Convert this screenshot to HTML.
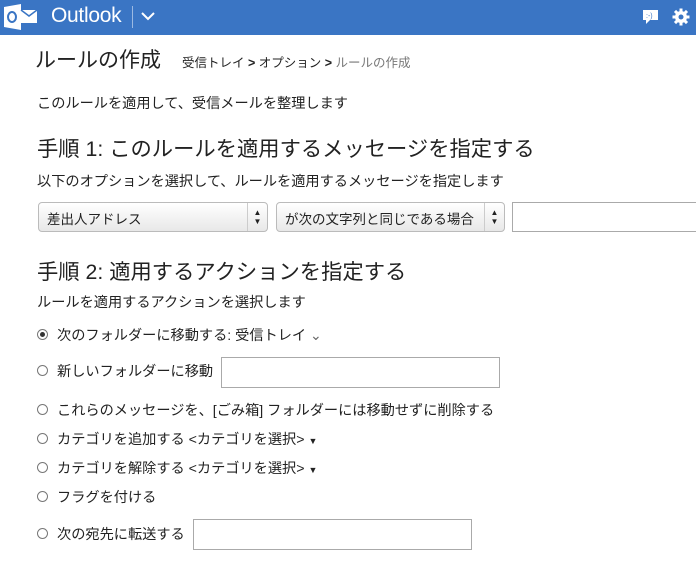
<!DOCTYPE html>
<html><head><meta charset="utf-8"><style>
*{margin:0;padding:0;box-sizing:border-box}
body{width:696px;height:571px;overflow:hidden;background:#fff;font-family:"Liberation Sans","Noto Sans CJK JP",sans-serif;color:#222;position:relative}
.hdr{position:absolute;left:0;top:0;width:696px;height:35px;background:#3a75c4}
.a{position:absolute;white-space:nowrap}
.sel{position:absolute;height:30px;border:1px solid #bbb;border-radius:4px;background:linear-gradient(#fff,#e8e8e8);font-size:13.5px;padding:5px 8px}
.arr{position:absolute;right:0;top:0;width:20px;height:28px;border-left:1px solid #ccc;font-size:8px;text-align:center;line-height:9px;padding-top:5px}
.r{position:absolute;left:37px;width:11px;height:11px;border:1px solid #777;border-radius:50%}
.t{font-size:14.2px}
.h{font-size:21.3px}
.in{position:absolute;border:1px solid #aaa;background:#fff}
</style></head><body>
<div class="hdr">
<svg class="a" style="left:2px;top:3px" width="46" height="28"><path d="M2 4L19 1V27L2 24Z" fill="#fff"/><rect x="19" y="7" width="16" height="13" fill="#fff"/><path d="M19 7l8 6 8-6" stroke="#3a75c4" stroke-width="1.5" fill="none"/><ellipse cx="10" cy="14" rx="4" ry="5" fill="none" stroke="#3a75c4" stroke-width="2"/></svg>
<div class="a" style="left:51px;top:4px;font-size:21px;color:#fff;letter-spacing:-0.3px">Outlook</div>
<div class="a" style="left:132px;top:6px;width:1px;height:22px;background:#9bb9e2"></div>
<svg class="a" style="left:141px;top:11px" width="14" height="10"><path d="M1 2l6 6 6-6" stroke="#fff" stroke-width="2" fill="none"/></svg>
<svg class="a" style="left:642px;top:9px" width="18" height="17"><path d="M1 1h15v10h-8l-4 4v-4H1z" fill="#fff"/><text x="4" y="9" font-size="7" fill="#3a75c4" font-family="Liberation Sans">:-)</text></svg>
<svg class="a" style="left:672px;top:8px" width="18" height="18" viewBox="0 0 18 18"><g fill="#fff"><circle cx="9" cy="9" r="6"/><rect x="7.5" y="0.5" width="3" height="17"/><rect x="0.5" y="7.5" width="17" height="3"/><rect x="7.5" y="0.5" width="3" height="17" transform="rotate(45 9 9)"/><rect x="7.5" y="0.5" width="3" height="17" transform="rotate(-45 9 9)"/></g><circle cx="9" cy="9" r="2.5" fill="#3a75c4"/></svg>
</div>
<div class="a" style="left:35px;top:44px;font-size:21px">ルールの作成</div>
<div class="a" style="left:182px;top:52px;font-size:12.5px">受信トレイ <b>&gt;</b> オプション <b>&gt;</b> <span style="color:#777">ルールの作成</span></div>
<div class="a t" style="left:37px;top:93px">このルールを適用して、受信メールを整理します</div>
<div class="a h" style="left:37px;top:132px">手順 1: このルールを適用するメッセージを指定する</div>
<div class="a t" style="left:37px;top:171px">以下のオプションを選択して、ルールを適用するメッセージを指定します</div>
<div class="sel" style="left:38px;top:202px;width:230px">差出人アドレス<div class="arr">▲<br>▼</div></div>
<div class="sel" style="left:276px;top:202px;width:229px">が次の文字列と同じである場合<div class="arr">▲<br>▼</div></div>
<div class="in" style="left:512px;top:202px;width:190px;height:30px"></div>
<div class="a h" style="left:37px;top:255px">手順 2: 適用するアクションを指定する</div>
<div class="a t" style="left:37px;top:292px">ルールを適用するアクションを選択します</div>
<div class="r" style="top:329px"><div style="position:absolute;left:2px;top:2px;width:5px;height:5px;border-radius:50%;background:#333"></div></div>
<div class="a t" style="left:57px;top:325px">次のフォルダーに移動する: 受信トレイ <span style="color:#666">⌄</span></div>
<div class="r" style="top:365px"></div>
<div class="a t" style="left:57px;top:361px">新しいフォルダーに移動</div>
<div class="in" style="left:221px;top:357px;width:279px;height:31px"></div>
<div class="r" style="top:404px"></div>
<div class="a t" style="left:57px;top:400px">これらのメッセージを、[ごみ箱] フォルダーには移動せずに削除する</div>
<div class="r" style="top:433px"></div>
<div class="a t" style="left:57px;top:429px">カテゴリを追加する &lt;カテゴリを選択&gt; <span style="font-size:9px">▼</span></div>
<div class="r" style="top:462px"></div>
<div class="a t" style="left:57px;top:458px">カテゴリを解除する &lt;カテゴリを選択&gt; <span style="font-size:9px">▼</span></div>
<div class="r" style="top:491px"></div>
<div class="a t" style="left:57px;top:487px">フラグを付ける</div>
<div class="r" style="top:528px"></div>
<div class="a t" style="left:57px;top:524px">次の宛先に転送する</div>
<div class="in" style="left:193px;top:519px;width:279px;height:31px"></div>
</body></html>
